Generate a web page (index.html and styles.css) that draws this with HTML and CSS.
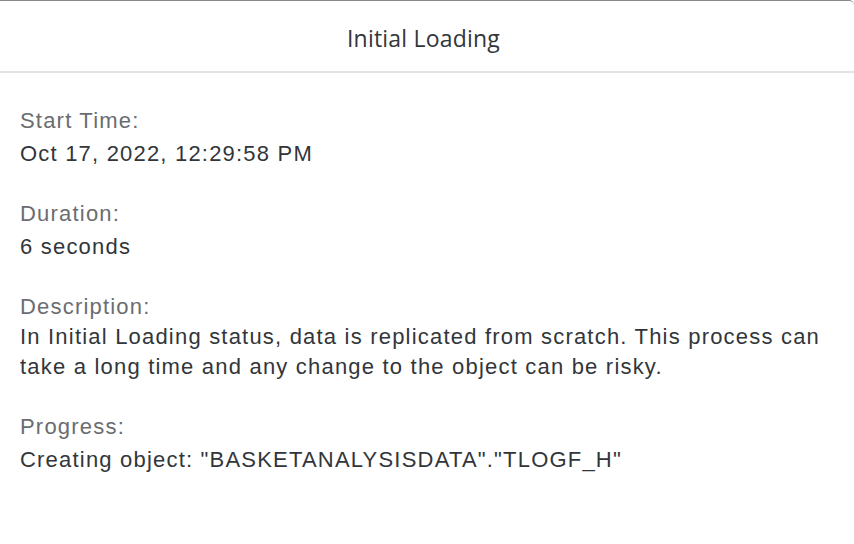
FILE: index.html
```html
<!DOCTYPE html>
<html>
<head>
<meta charset="utf-8">
<link rel="stylesheet" href="styles.css">
</head>
<body>
<div class="dialog">
  <header class="dialog-header">
    <h1 class="title">Initial Loading</h1>
  </header>
  <div class="dialog-body">
    <div class="field">
      <div class="label">Start Time:</div>
      <div class="value">Oct 17, 2022, 12:29:58 PM</div>
    </div>
    <div class="field">
      <div class="label">Duration:</div>
      <div class="value">6 seconds</div>
    </div>
    <div class="field field-tight">
      <div class="label">Description:</div>
      <div class="value">In Initial Loading status, data is replicated from scratch. This process can take a long time and any change to the object can be risky.</div>
    </div>
    <div class="field">
      <div class="label">Progress:</div>
      <div class="value">Creating object: "BASKETANALYSISDATA"."TLOGF_H"</div>
    </div>
  </div>
</div>
</body>
</html>
```

FILE: styles.css
```css
html, body {
  margin: 0;
  padding: 0;
  background: #ffffff;
}
body {
  font-family: "Liberation Sans", Arial, sans-serif;
  color: #32363a;
}
.dialog {
  width: 854px;
  height: 544px;
  box-sizing: border-box;
  border-top: 1px solid #8a8a8a;
  border-top-right-radius: 5px;
  overflow: hidden;
}
.dialog-header {
  height: 72px;
  box-sizing: border-box;
  padding: 4px 7px 0 0;
  border-bottom: 2px solid #e2e2e2;
  display: flex;
  align-items: center;
  justify-content: center;
}
.title {
  margin: 0;
  font-family: "Open Sans", sans-serif;
  font-weight: 400;
  font-size: 23px;
  letter-spacing: 0.2px;
  color: #32363a;
}
.dialog-body {
  padding: 33px 20px 0 20px;
  display: flex;
  flex-direction: column;
  gap: 30px;
}
.label {
  font-size: 22px;
  line-height: 30px;
  letter-spacing: 1.2px;
  color: #6a6d70;
  margin-bottom: 3px;
}
.field-tight .label {
  margin-bottom: 0;
}
.value {
  font-size: 22px;
  line-height: 30px;
  letter-spacing: 1.2px;
  color: #32363a;
}
```
